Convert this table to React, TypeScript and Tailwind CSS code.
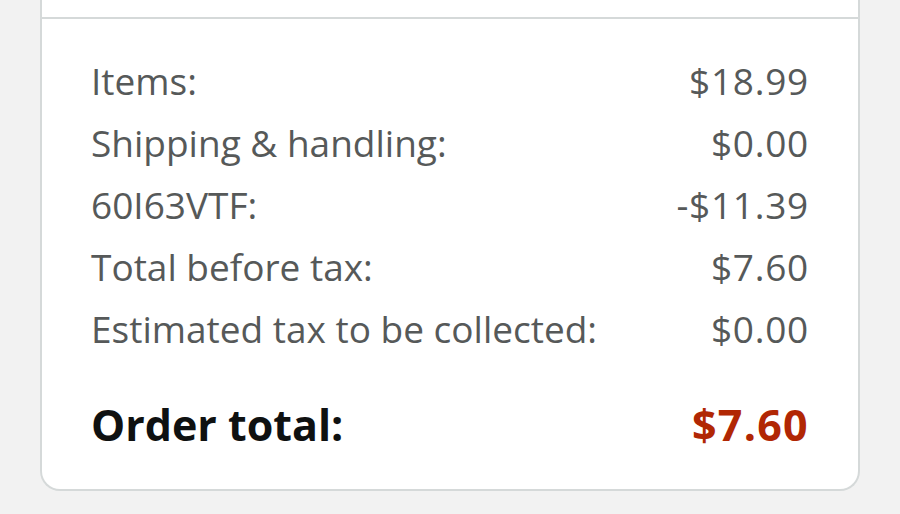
const rows = [
  { label: 'Items:', value: '$18.99' },
  { label: 'Shipping & handling:', value: '$0.00' },
  { label: '60I63VTF:', value: '-$11.39' },
  { label: 'Total before tax:', value: '$7.60' },
  { label: 'Estimated tax to be collected:', value: '$0.00' },
];

export default function App() {
  return (
    <div className="w-[900px] h-[514px] bg-[#f2f2f2] px-[40px] font-['Open_Sans',sans-serif] overflow-hidden">
      <div className="bg-white border-x-2 border-b-2 border-[#d5d9d9] rounded-b-[20px]">
        {/* top section, cut off */}
        <div className="h-[17px]" />
        <div className="border-t-2 border-[#d5d9d9] px-[49px] pt-[31px] pb-[33px]">
          {rows.map((r) => (
            <div key={r.label} className="flex justify-between items-center h-[62px] text-[37px] text-[#565959]">
              <span>{r.label}</span>
              <span className="tracking-[0.02em]">{r.value}</span>
            </div>
          ))}
          <div className="flex justify-between items-center h-[62px] mt-[34px] text-[43px] font-bold">
            <span className="text-[#0f1111]">Order total:</span>
            <span className="text-[#b12704] tracking-[0.03em]">$7.60</span>
          </div>
        </div>
      </div>
    </div>
  );
}
